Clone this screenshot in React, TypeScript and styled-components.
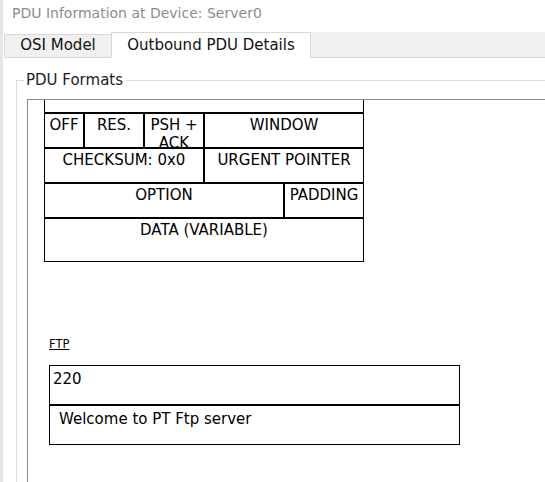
import { useLayoutEffect, useRef } from 'react'
import styled, { createGlobalStyle } from 'styled-components'

const FONT = "'DejaVu Sans', Verdana, sans-serif"
const BIT_WIDTH = 10
const VISIBLE_ABOVE_ANCHOR = 13

interface Field {
    label: string
    bits: number
}

interface HeaderRow {
    fields: Field[]
    height?: number
    anchor?: boolean
}

// first row is the tail of the acknowledgement row, scrolled mostly out of view
const TCP_ROWS: HeaderRow[] = [
    { fields: [{ label: '', bits: 32 }] },
    {
        anchor: true,
        fields: [
            { label: 'OFF', bits: 4 },
            { label: 'RES.', bits: 6 },
            { label: 'PSH + ACK', bits: 6 },
            { label: 'WINDOW', bits: 16 }
        ]
    },
    { fields: [{ label: 'CHECKSUM: 0x0', bits: 16 }, { label: 'URGENT POINTER', bits: 16 }] },
    { fields: [{ label: 'OPTION', bits: 24 }, { label: 'PADDING', bits: 8 }] },
    { fields: [{ label: 'DATA (VARIABLE)', bits: 32 }], height: 44 }
]

const FTP_LINES = [
    { text: '220', indent: 3 },
    { text: 'Welcome to PT Ftp server', indent: 9 }
]

export default function App() {
    const paneRef = useRef<HTMLDivElement>(null)
    const anchorRef = useRef<HTMLDivElement>(null)

    // the pane is shown scrolled down so the header starts just above the OFF row
    useLayoutEffect(() => {
        const pane = paneRef.current
        const row = anchorRef.current
        if (!pane || !row) return

        const offset = row.getBoundingClientRect().top - pane.getBoundingClientRect().top - pane.clientTop + pane.scrollTop
        pane.scrollTop = offset - VISIBLE_ABOVE_ANCHOR
    }, [])

    return <>
        <GlobalStyle />
        <Window>
            <StatusMark />
            <TitleBar>PDU Information at Device: Server0</TitleBar>
            <TabBar>
                <Tab>OSI Model</Tab>
                <Tab $active>Outbound PDU Details</Tab>
                <TabFiller />
            </TabBar>
            <TabContent>
                <GroupBox>
                    <GroupTitle>PDU Formats</GroupTitle>
                    <ScrollPane ref={paneRef}>
                        <PaneContent>
                            <HeaderTable>
                                {TCP_ROWS.map((row, i) =>
                                    <FieldRow key={i} $height={row.height ?? 35} ref={row.anchor ? anchorRef : undefined}>
                                        {row.fields.map((field, j) =>
                                            <FieldCell key={j} $bits={field.bits}>{field.label}</FieldCell>
                                        )}
                                    </FieldRow>
                                )}
                            </HeaderTable>
                            <FtpSection>
                                <ProtoLabel>FTP</ProtoLabel>
                                <FtpTable>
                                    {FTP_LINES.map(line =>
                                        <FtpRow key={line.text} $indent={line.indent}>{line.text}</FtpRow>
                                    )}
                                </FtpTable>
                            </FtpSection>
                        </PaneContent>
                    </ScrollPane>
                </GroupBox>
            </TabContent>
        </Window>
    </>
}

const GlobalStyle = createGlobalStyle`
    html, body {
        margin: 0;
        padding: 0;
        background: #ffffff;
    }

    body {
        font-family: ${FONT};
        color: #000000;
    }
`

const Window = styled.div`
    position: relative;
    width: 545px;
    height: 482px;
    overflow: hidden;
    box-sizing: border-box;
    border-left: 3px solid #e6e6e6;
    background: #ffffff;
`

const StatusMark = styled.span`
    position: absolute;
    left: -3px;
    top: 143px;
    width: 3px;
    height: 3px;
    background: #1fd01f;
`

const TitleBar = styled.div`
    height: 32px;
    box-sizing: border-box;
    padding: 5px 0 0 9px;
    font-size: 14px;
    line-height: 17px;
    color: #8c8c8c;
    white-space: nowrap;
`

const TabBar = styled.div`
    display: flex;
    align-items: flex-end;
    height: 26px;
    padding-left: 1px;
`

const Tab = styled.div<{ $active?: boolean }>`
    display: flex;
    align-items: center;
    justify-content: center;
    box-sizing: border-box;
    width: ${p => p.$active ? 200 : 107}px;
    height: ${p => p.$active ? 26 : 24}px;
    border: 1px solid #d9d9d9;
    border-right: ${p => p.$active ? '1px solid #d9d9d9' : 'none'};
    border-bottom: ${p => p.$active ? 'none' : '1px solid #d9d9d9'};
    background: ${p => p.$active ? '#ffffff' : '#f0f0f0'};
    font-size: 15px;
    line-height: 17.5px;
    color: #111111;
    white-space: nowrap;
`

const TabFiller = styled.div`
    flex: 1;
    height: 26px;
    box-sizing: border-box;
    background: #f0f0f0;
    border-bottom: 1px solid #d9d9d9;
`

const TabContent = styled.div`
    padding-left: 13px;
`

const GroupBox = styled.fieldset`
    margin: 13px 0 0 0;
    padding: 10px 0 0 10px;
    min-width: 0;
    height: 420px;
    box-sizing: border-box;
    border: 1px solid #dcdcdc;
    border-right: none;
    border-bottom: none;
`

const GroupTitle = styled.legend`
    margin-left: -3px;
    padding: 0 3px 0 2px;
    font-size: 15px;
    line-height: 18px;
    color: #1e1e1e;
`

const ScrollPane = styled.div`
    height: 400px;
    overflow: hidden;
    border-top: 1px solid #8c8c8c;
    border-left: 1px solid #8c8c8c;
`

const PaneContent = styled.div`
    padding: 0 0 320px 16px;
`

const ProtoLabel = styled.div`
    font-size: 11.5px;
    line-height: 14px;
    text-decoration: underline;
    margin-bottom: 14px;
`

const HeaderTable = styled.div`
    width: ${32 * BIT_WIDTH}px;
`

const FieldRow = styled.div<{ $height: number }>`
    display: flex;
    height: ${p => p.$height}px;
`

const FieldCell = styled.div<{ $bits: number }>`
    width: ${p => p.$bits * BIT_WIDTH}px;
    height: 100%;
    box-sizing: border-box;
    border: 1px solid #000000;
    padding: 3px 1px 0;
    overflow: hidden;
    text-align: center;
    font-size: 15px;
    line-height: 17.5px;
`

const FtpSection = styled.div`
    margin: 75px 0 0 5px;
`

const FtpTable = styled.div`
    width: 411px;
`

const FtpRow = styled.div<{ $indent: number }>`
    height: 40px;
    box-sizing: border-box;
    border: 1px solid #000000;
    padding: 5px 0 0 ${p => p.$indent}px;
    font-size: 15px;
    line-height: 17.5px;
    white-space: nowrap;
`
